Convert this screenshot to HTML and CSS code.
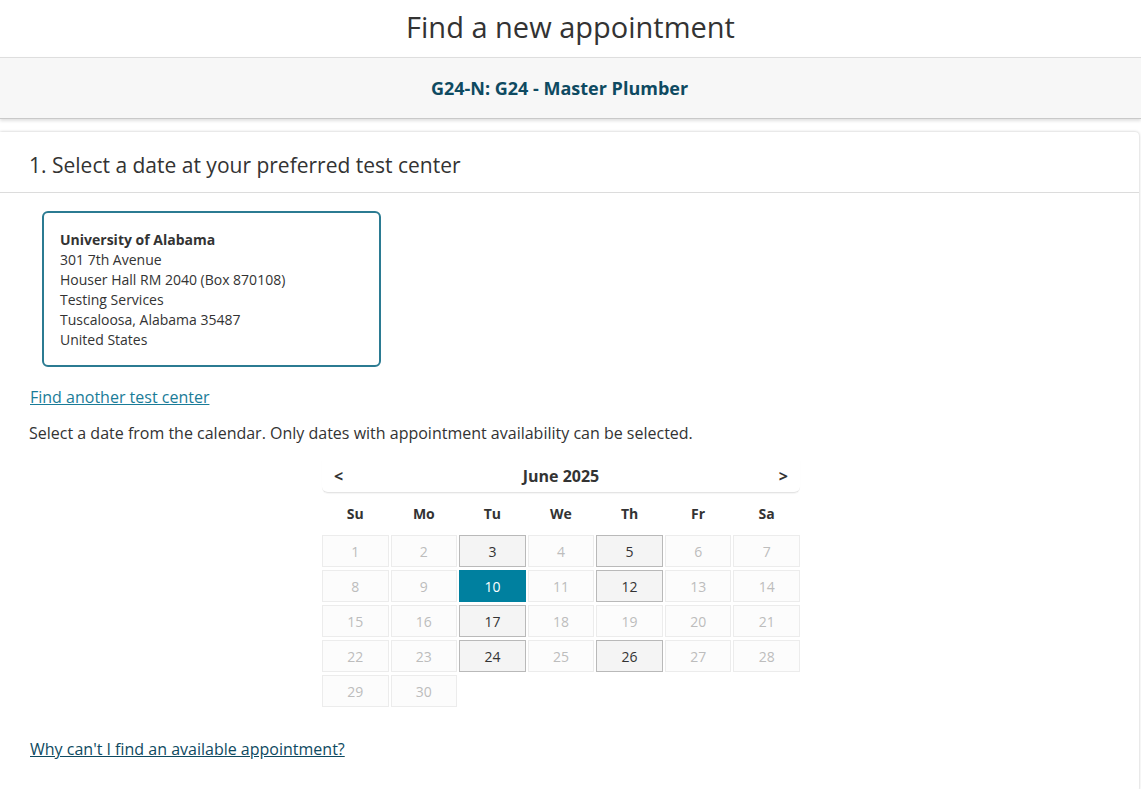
FILE: index.html
```html
<!DOCTYPE html>
<html>
<head>
<meta charset="utf-8">
<link rel="stylesheet" href="styles.css">
</head>
<body>
<h1 class="page-title">Find a new appointment</h1>
<div class="exam-band">G24-N: G24 - Master Plumber</div>
<section class="card">
  <h2 class="card-title">1. Select a date at your preferred test center</h2>
  <div class="card-body">
    <div class="center-box">
      <div class="center-name">University of Alabama</div>
      <div>301 7th Avenue</div>
      <div>Houser Hall RM 2040 (Box 870108)</div>
      <div>Testing Services</div>
      <div>Tuscaloosa, Alabama 35487</div>
      <div>United States</div>
    </div>
    <a class="link-find" href="#">Find another test center</a>
    <p class="hint">Select a date from the calendar. Only dates with appointment availability can be selected.</p>
    <div class="calendar">
      <div class="cal-head">
        <span class="cal-nav">&lt;</span>
        <span class="cal-month">June 2025</span>
        <span class="cal-nav">&gt;</span>
      </div>
      <div class="cal-dow">
        <span>Su</span><span>Mo</span><span>Tu</span><span>We</span><span>Th</span><span>Fr</span><span>Sa</span>
      </div>
      <div class="cal-grid">
        <span class="day">1</span><span class="day">2</span><span class="day avail">3</span><span class="day">4</span><span class="day avail">5</span><span class="day">6</span><span class="day">7</span>
        <span class="day">8</span><span class="day">9</span><span class="day selected">10</span><span class="day">11</span><span class="day avail">12</span><span class="day">13</span><span class="day">14</span>
        <span class="day">15</span><span class="day">16</span><span class="day avail">17</span><span class="day">18</span><span class="day">19</span><span class="day">20</span><span class="day">21</span>
        <span class="day">22</span><span class="day">23</span><span class="day avail">24</span><span class="day">25</span><span class="day avail">26</span><span class="day">27</span><span class="day">28</span>
        <span class="day">29</span><span class="day">30</span>
      </div>
    </div>
    <a class="link-why" href="#">Why can't I find an available appointment?</a>
  </div>
</section>
</body>
</html>
```
FILE: styles.css
```css
* { box-sizing: border-box; }
html, body { margin: 0; padding: 0; background: #fff; }
body {
  font-family: "Open Sans", "Noto Sans", sans-serif;
  color: #333;
  overflow: hidden;
}
.page-title {
  margin: 0;
  height: 57px;
  line-height: 54px;
  text-align: center;
  font-size: 29px;
  font-weight: 400;
  color: #333;
}
.exam-band {
  height: 62px;
  line-height: 61px;
  background: #f7f7f7;
  border-top: 1px solid #dedede;
  border-bottom: 1px solid #c9c9c9;
  box-shadow: 0 2px 3px rgba(0,0,0,0.12);
  padding-right: 22px;
  text-align: center;
  font-size: 18px;
  font-weight: 700;
  color: #0e4a61;
}
.card {
  margin: 13px 2px 0 0;
  background: #fff;
  border-radius: 0 4px 4px 0;
  box-shadow: 0 0 3px rgba(0,0,0,0.25);
  min-height: 660px;
}
.card-title {
  margin: 0;
  padding: 18px 29px 11px;
  font-size: 21px;
  line-height: 31px;
  font-weight: 400;
  color: #333;
  border-bottom: 1px solid #dcdcdc;
}
.card-body {
  padding: 18px 29px 30px;
  display: flex;
  flex-direction: column;
  align-items: flex-start;
}
.center-box {
  margin-left: 13px;
  width: 339px;
  height: 156px;
  border: 2px solid #2b7b92;
  border-radius: 6px;
  padding: 17px 16px 14px;
  font-size: 14px;
  line-height: 20px;
  color: #333;
}
.center-name { font-weight: 700; }
.link-find {
  margin-top: 19px;
  margin-left: 1px;
  font-size: 16px;
  line-height: 22px;
  color: #1a7c98;
  text-decoration: underline;
}
.hint {
  margin: 14px 0 0;
  font-size: 16px;
  line-height: 22px;
  color: #333;
}
.calendar {
  margin: 15px 0 0 293px;
  width: 478px;
}
.cal-head {
  height: 34px;
  display: flex;
  align-items: center;
  justify-content: space-between;
  padding: 0 12px 0 12px;
  border-bottom: 1px solid #e4e4e4;
  border-radius: 0 0 6px 6px;
  box-shadow: 0 1px 1px rgba(0,0,0,0.04);
}
.cal-month {
  font-size: 16px;
  font-weight: 700;
  color: #333;
}
.cal-nav {
  font-size: 16px;
  font-weight: 700;
  color: #333;
}
.cal-dow {
  display: grid;
  grid-template-columns: repeat(7, 1fr);
  column-gap: 2px;
  height: 42px;
  align-items: center;
  text-align: center;
  font-size: 14px;
  font-weight: 700;
  color: #333;
  padding-bottom: 1px;
}
.cal-grid {
  display: grid;
  grid-template-columns: repeat(7, 1fr);
  gap: 3px 2px;
}
.day {
  height: 32px;
  display: flex;
  align-items: center;
  justify-content: center;
  font-size: 14px;
  color: #bdbdbd;
  border: 1px solid #ececec;
  background: #fcfcfc;
}
.day.avail {
  background: #f4f4f4;
  border-color: #b9b9b9;
  color: #333;
}
.day.selected {
  background: #00809f;
  border-color: #00809f;
  color: #fff;
}
.link-why {
  margin-top: 31px;
  margin-left: 1px;
  font-size: 16px;
  line-height: 22px;
  color: #0e4a61;
  text-decoration: underline;
}
```
